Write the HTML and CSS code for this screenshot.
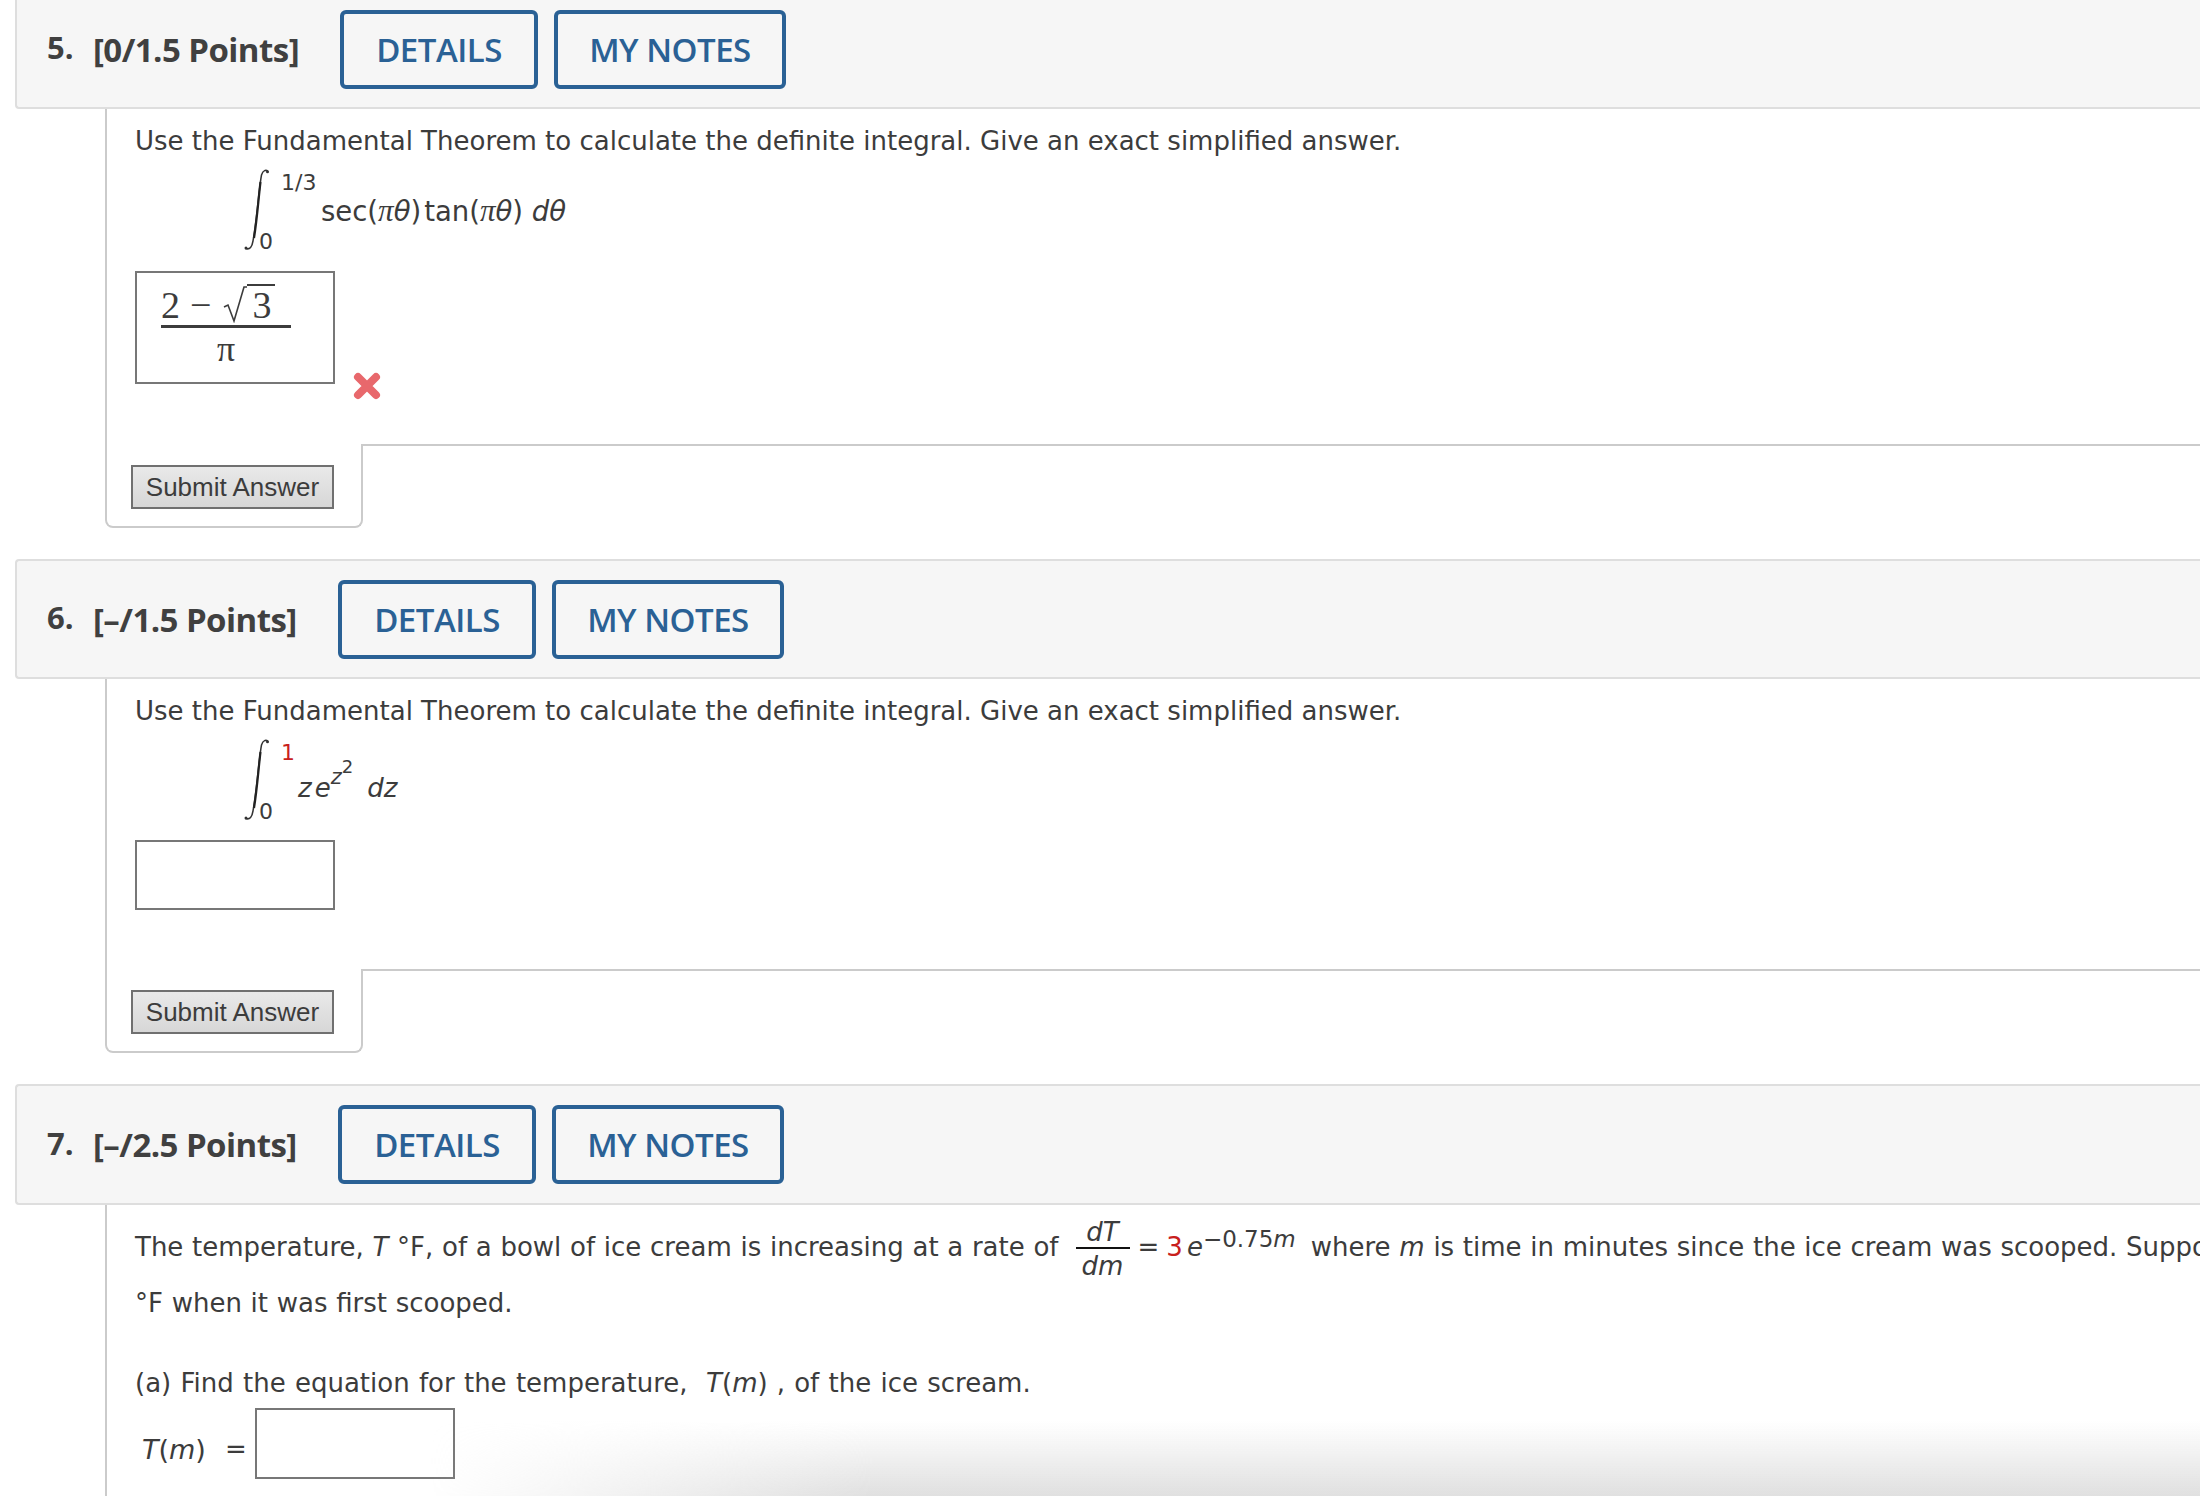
FILE: index.html
```html
<!DOCTYPE html>
<html lang="en">
<head>
<meta charset="utf-8">
<title>Questions</title>
<link rel="stylesheet" href="styles.css">
</head>
<body>
<main class="page">

<section class="q q5">
  <header class="qhead qhead-first">
    <span class="qnum">5.</span><span class="qpts">[0/1.5 Points]</span>
    <a class="btn btn-details">DETAILS</a><a class="btn btn-notes">MY NOTES</a>
  </header>
  <div class="qbody">
    <div class="qmain">
      <p class="prompt">Use the Fundamental Theorem to calculate the definite integral. Give an exact simplified answer.</p>
      <div class="integral">
        <svg class="intsign" width="30" height="84" viewBox="0 0 30 84"><path d="M27 3.500C25 1.500 22 2 20.500 7 18 20 16 50 12 73c-1 6-3 9-7.500 7.500" fill="none" stroke="#333" stroke-width="1.500"/><path d="M19.500 14C17.500 30 16 52 13 70" fill="none" stroke="#222" stroke-width="2.200"/><circle cx="26.500" cy="3.800" r="1.500" fill="#333"/><circle cx="5" cy="80" r="1.500" fill="#333"/></svg>
        <span class="lim lim-top">1/3</span><span class="lim lim-bot">0</span>
        <span class="expr expr5">sec(<i class="gr">π</i><i>θ</i>)<span class="thin"></span>tan(<i class="gr">π</i><i>θ</i>) <i>dθ</i></span>
      </div>
      <div class="answer-row">
        <div class="ansbox ansbox-tall">
          <div class="frac">
            <div class="frac-num">2<span class="minus">−</span><svg class="rad" width="24" height="38" viewBox="0 0 24 38"><path d="M1 22l4-2 6 16L21 2h3" fill="none" stroke="#3c3c3c" stroke-width="1.600"/></svg><span class="radicand">3</span></div>
            <div class="frac-den">π</div>
          </div>
        </div>
        <svg class="wrong" width="28" height="28" viewBox="0 0 28 28"><path d="M5 5l18 18M23 5L5 23" stroke="#e8686c" stroke-width="8" stroke-linecap="round"/></svg>
      </div>
    </div>
    <div class="actions">
      <div class="submit-cell"><button class="submit">Submit Answer</button></div>
      <div class="rest"></div>
    </div>
  </div>
</section>

<section class="q q6">
  <header class="qhead">
    <span class="qnum">6.</span><span class="qpts">[–/1.5 Points]</span>
    <a class="btn btn-details">DETAILS</a><a class="btn btn-notes">MY NOTES</a>
  </header>
  <div class="qbody">
    <div class="qmain">
      <p class="prompt">Use the Fundamental Theorem to calculate the definite integral. Give an exact simplified answer.</p>
      <div class="integral">
        <svg class="intsign" width="30" height="84" viewBox="0 0 30 84"><path d="M27 3.500C25 1.500 22 2 20.500 7 18 20 16 50 12 73c-1 6-3 9-7.500 7.500" fill="none" stroke="#333" stroke-width="1.500"/><path d="M19.500 14C17.500 30 16 52 13 70" fill="none" stroke="#222" stroke-width="2.200"/><circle cx="26.500" cy="3.800" r="1.500" fill="#333"/><circle cx="5" cy="80" r="1.500" fill="#333"/></svg>
        <span class="lim lim-top red">1</span><span class="lim lim-bot">0</span>
        <span class="expr expr6"><i>z</i><span class="thin"></span><i>e</i><sup class="pow"><i>z</i><sup class="pow2">2</sup></sup><span class="gap"></span><i>dz</i></span>
      </div>
      <div class="answer-row"><div class="ansbox"></div></div>
    </div>
    <div class="actions">
      <div class="submit-cell"><button class="submit">Submit Answer</button></div>
      <div class="rest"></div>
    </div>
  </div>
</section>

<section class="q q7">
  <header class="qhead">
    <span class="qnum">7.</span><span class="qpts">[–/2.5 Points]</span>
    <a class="btn btn-details">DETAILS</a><a class="btn btn-notes">MY NOTES</a>
  </header>
  <div class="qbody qbody-open">
    <div class="line line-first">The temperature, <i>T</i> °F, of a bowl of ice cream is increasing at a rate of<span class="dfrac"><span class="dfrac-n"><i>dT</i></span><span class="dfrac-d"><i>dm</i></span></span><span class="eq">=</span><span class="red three">3</span><i class="e">e</i><sup class="exp">−0.75<i>m</i></sup><span class="after">where <i>m</i> is time in minutes since the ice cream was scooped. Suppose</span></div>
    <div class="line line-second">°F when it was first scooped.</div>
    <div class="line line-third">(a) Find the equation for the temperature,&nbsp; <i>T</i>(<i>m</i>)<span class="comma">,</span> of the ice scream.</div>
    <div class="tm-row"><span class="tm"><i>T</i>(<i>m</i>)</span><span class="tm-eq">=</span><div class="ansbox ansbox-t"></div></div>
  </div>
</section>

</main>
<div class="edge-shadow"></div>
</body>
</html>
```
FILE: styles.css
```css
* { box-sizing: border-box; }
html, body { margin: 0; height: 100%; overflow: hidden; background: #fff; }
body { width: 2200px; height: 1496px; position: relative; font-family: "DejaVu Sans", sans-serif; color: #3c3c3c; }
.page { padding-left: 15px; width: 2200px; }

.qhead { display: flex; align-items: center; height: 120px; padding: 0 0 0 30px; background: #f6f6f6; border: 2px solid #dedede; border-right: 0; border-radius: 4px 0 0 4px; font-family: "Open Sans", sans-serif; }
.qhead-first { height: 109px; border-top: 0; border-radius: 0 0 0 4px; padding-bottom: 9px; }
.q7 .qhead { height: 121px; }
.qnum { font-size: 31px; font-weight: 700; width: 46px; position: relative; top: -2px; color: #404040; }
.qpts { font-size: 33px; font-weight: 700; letter-spacing: -0.55px; width: 245px; white-space: nowrap; color: #404040; }
.q5 .qpts { width: 247px; }
.btn { display: flex; align-items: center; justify-content: center; height: 79px; border: 4px solid #2a6195; border-radius: 6px; color: #2a6195; font-size: 33px; font-weight: 600; letter-spacing: -0.5px; }
.btn-details { width: 198px; margin-right: 16px; }
.btn-notes { width: 232px; }

.qbody { margin-left: 90px; }
.qmain { border-left: 2px solid #cbcbcb; padding-left: 28px; }
.prompt { margin: 0; font-size: 26px; line-height: 34px; padding-top: 15px; white-space: nowrap; }

.integral { position: relative; height: 84px; margin-top: 10px; }
.intsign { position: absolute; left: 106px; top: 0; }
.lim { position: absolute; font-size: 22px; line-height: 24px; }
.lim-top { left: 146px; top: 3px; }
.lim-bot { left: 124px; top: 62px; }
.expr { position: absolute; top: 25px; font-size: 27.500px; line-height: 36px; white-space: nowrap; }
.expr5 { left: 186px; }
.expr6 { left: 163px; top: 32px; font-size: 26px; }
.gr { font-family: "Liberation Serif", serif; font-size: 31px; }
.thin { display: inline-block; width: 3px; }
.gap { display: inline-block; width: 14px; }
.pow { font-size: 21px; position: relative; top: -3px; vertical-align: super; line-height: 0; }
.pow2 { font-size: 18px; position: relative; top: -3px; vertical-align: super; line-height: 0; }
.red { color: #c8201c; }

.answer-row { display: flex; align-items: flex-start; padding-top: 19px; height: 192px; }
.q6 .answer-row { height: 147px; padding-top: 18px; }
.ansbox { width: 200px; height: 70px; border: 2px solid #777; background: #fff; flex: none; }
.ansbox-tall { height: 113px; padding: 8px 0 0 24px; }
.ansbox-t { height: 71px; }
.wrong { margin: 101px 0 0 18px; }

.frac { width: 130px; font-family: "Liberation Serif", serif; font-size: 38px; text-align: center; }
.frac-num { display: flex; align-items: flex-end; justify-content: flex-start; height: 47px; border-bottom: 3px solid #3c3c3c; line-height: 40px; }
.minus { margin: 0 12px 0 10px; }
.radicand { border-top: 2px solid #3c3c3c; padding: 0 4px 0 5px; line-height: 38px; height: 39px; margin-bottom: 2px; }
.rad { margin-bottom: 2px; }
.frac-den { font-weight: 400; line-height: 36px; font-size: 36px; padding-top: 3px; }

.actions { display: flex; height: 84px; }
.submit-cell { width: 258px; padding: 21px 0 0 24px; border: 2px solid #cbcbcb; border-top: 0; border-radius: 0 0 8px 8px; }
.rest { flex: 1; border-top: 2px solid #cbcbcb; }
.submit { display: block; width: 203px; height: 44px; padding: 0; border: 2px solid #707070; background: linear-gradient(#e9e9e9, #d7d7d7); font-family: "Liberation Sans", sans-serif; font-size: 26px; color: #3c3c3c; }

.q6, .q7 { margin-top: 31px; }

.qbody-open { border-left: 2px solid #cbcbcb; padding-left: 28px; height: 300px; font-size: 26px; word-spacing: 0.45px; }
.line { white-space: nowrap; line-height: 34px; }
.line-first { height: 62px; padding-top: 10px; }
.dfrac { display: inline-flex; flex-direction: column; align-items: center; width: 54px; margin: 0 8px 0 17px; vertical-align: middle; line-height: 30px; position: relative; top: 2px; }
.dfrac-n { border-bottom: 2px solid #111; width: 100%; text-align: center; height: 32px; }
.dfrac-d { height: 34px; line-height: 34px; }
.eq { margin-right: 7px; }
.e { margin-left: 4px; }
.exp { font-size: 23px; position: relative; top: -9px; vertical-align: baseline; line-height: 0; }
.after { margin-left: 15px; }
.line-second { margin-top: 19px; }
.line-third { margin-top: 46px; word-spacing: 1px; }
.comma { margin-left: 9px; }
.tm-row { display: flex; align-items: center; margin-top: 5px; padding-left: 7px; height: 76px; }
.tm { width: 83px; font-size: 27px; position: relative; top: 6px; }
.tm-eq { width: 30px; position: relative; top: 6px; }

.edge-shadow { position: absolute; left: 430px; right: 0; top: 1396px; bottom: 0; pointer-events: none; background: linear-gradient(to bottom, rgba(224,224,224,0) 25%, rgba(224,224,224,1) 100%); -webkit-mask-image: linear-gradient(to right, transparent, #000 25%); mask-image: linear-gradient(to right, transparent, #000 25%); }
```
